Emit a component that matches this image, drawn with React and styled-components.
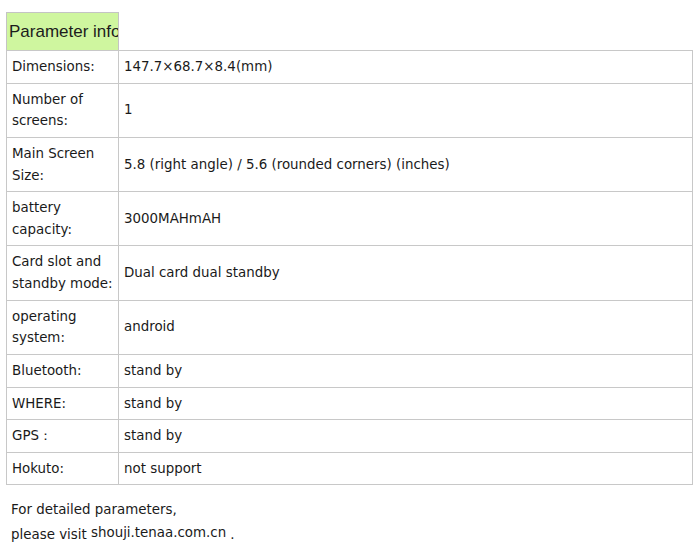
import React from 'react'
import styled, { createGlobalStyle } from 'styled-components'

const GlobalStyle = createGlobalStyle`
  body {
    margin: 0;
    background: #fff;
    font-family: "DejaVu Sans", Verdana, sans-serif;
    color: #1a1a1a;
  }
`

const Page = styled.div`
  padding: 12px 7px 0 6px;
`

const Caption = styled.div`
  box-sizing: border-box;
  width: 113px;
  height: 38px;
  border: 1px solid #c4c4c4;
  border-bottom: none;
  background: #cff69f;
  font-family: "Liberation Sans", Arial, sans-serif;
  font-size: 17px;
  line-height: 37px;
  padding-left: 2px;
  color: #1c1c1c;
  white-space: nowrap;
  overflow: hidden;
`

const Table = styled.table`
  width: 100%;
  border-collapse: collapse;
  table-layout: fixed;
  font-size: 13.4px;
  line-height: 21.7px;
`

const Cell = styled.td`
  border: 1px solid #c8c8c8;
  padding: 4.95px 5px;
  vertical-align: middle;
  width: ${props => (props.$label ? '101px' : 'auto')};
`

const Footer = styled.p`
  margin: 13px 0 0;
  padding-left: 5px;
  font-size: 13.4px;
  line-height: 23px;
`

const Site = styled.span`
  vertical-align: 2px;
  margin-right: 4px;
`

const rows = [
  ['Dimensions:', '147.7×68.7×8.4(mm)'],
  ['Number of screens:', '1'],
  ['Main Screen Size:', '5.8 (right angle) / 5.6 (rounded corners) (inches)'],
  ['battery capacity:', '3000MAHmAH'],
  ['Card slot and standby mode:', 'Dual card dual standby'],
  ['operating system:', 'android'],
  ['Bluetooth:', 'stand by'],
  ['WHERE:', 'stand by'],
  ['GPS：', 'stand by'],
  ['Hokuto:', 'not support'],
]

export default function App() {
  return (
    <Page>
      <GlobalStyle />
      <Caption>Parameter info</Caption>
      <Table>
        <tbody>
          {rows.map(([label, value]) => (
            <tr key={label}>
              <Cell $label>{label}</Cell>
              <Cell>{value}</Cell>
            </tr>
          ))}
        </tbody>
      </Table>
      <Footer>
        For detailed parameters,
        <br />
        please visit <Site>shouji.tenaa.com.cn</Site>.
      </Footer>
    </Page>
  )
}
